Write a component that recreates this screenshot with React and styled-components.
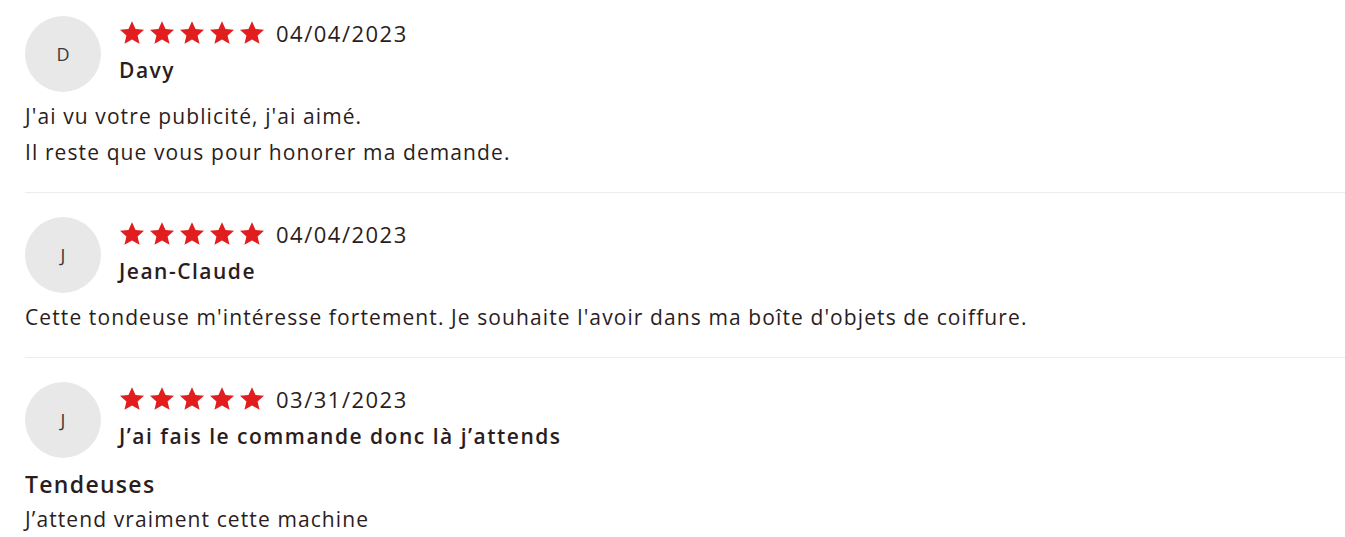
import React from "react";
import styled, { createGlobalStyle } from "styled-components";

const GlobalStyle = createGlobalStyle`
  html, body {
    margin: 0;
    padding: 0;
    background: #ffffff;
  }
  body {
    font-family: "Open Sans", "Liberation Sans", sans-serif;
    color: #2b1d1d;
  }
`;

const reviews = [
  {
    initial: "D",
    date: "04/04/2023",
    name: "Davy",
    lines: ["J'ai vu votre publicité, j'ai aimé.", "Il reste que vous pour honorer ma demande."],
  },
  {
    initial: "J",
    date: "04/04/2023",
    name: "Jean-Claude",
    lines: ["Cette tondeuse m'intéresse fortement. Je souhaite l'avoir dans ma boîte d'objets de coiffure."],
  },
  {
    initial: "J",
    date: "03/31/2023",
    name: "J’ai fais le commande donc là j’attends",
    title: "Tendeuses",
    lines: ["J’attend vraiment cette machine"],
  },
];

function Star() {
  return (
    <StarSvg viewBox="0 0 24 24">
      <path d="M12 1.2l3.25 7.15 7.85.7-5.95 5.15 1.8 7.75L12 17.9l-6.95 4.05 1.8-7.75-5.95-5.15 7.85-.7z" />
    </StarSvg>
  );
}

export default function App() {
  return (
    <>
      <GlobalStyle />
      <List>
        {reviews.map((r, i) => (
          <Review key={i} $last={i === reviews.length - 1}>
            <Header>
              <Avatar>{r.initial}</Avatar>
              <Meta>
                <RatingRow>
                  <Stars>
                    {[0, 1, 2, 3, 4].map((s) => (
                      <Star key={s} />
                    ))}
                  </Stars>
                  <DateText>{r.date}</DateText>
                </RatingRow>
                <Name>{r.name}</Name>
              </Meta>
            </Header>
            {r.title && <Title>{r.title}</Title>}
            <Body $afterTitle={!!r.title}>
              {r.lines.map((l, j) => (
                <Line key={j}>{l}</Line>
              ))}
            </Body>
          </Review>
        ))}
      </List>
    </>
  );
}

const List = styled.div`
  padding: 16px 0 0 25px;
`;

const Review = styled.div`
  padding-bottom: ${(p) => (p.$last ? "0" : "22px")};
  margin-bottom: 24px;
  border-bottom: ${(p) => (p.$last ? "none" : "1px solid #ececec")};
`;

const Header = styled.div`
  display: flex;
  align-items: flex-start;
  gap: 18px;
`;

const Avatar = styled.div`
  width: 76px;
  height: 76px;
  border-radius: 50%;
  background: #e8e8e8;
  display: flex;
  align-items: center;
  justify-content: center;
  font-size: 18px;
  color: #3a3a3a;
  flex-shrink: 0;
`;

const Meta = styled.div`
  display: flex;
  flex-direction: column;
  gap: 8px;
  padding-top: 2px;
`;

const RatingRow = styled.div`
  display: flex;
  align-items: center;
  gap: 11px;
  height: 30px;
`;

const Stars = styled.div`
  display: flex;
  gap: 4px;
`;

const StarSvg = styled.svg`
  width: 26px;
  height: 26px;
  fill: #e21d1d;
  display: block;
`;

const DateText = styled.span`
  font-size: 22px;
  letter-spacing: 1.5px;
  line-height: 30px;
`;

const Name = styled.div`
  font-size: 21px;
  font-weight: 600;
  letter-spacing: 1.5px;
  line-height: 28px;
`;

const Title = styled.div`
  margin-top: 11px;
  font-size: 23px;
  font-weight: 600;
  letter-spacing: 1.3px;
  line-height: 30px;
`;

const Body = styled.div`
  margin-top: ${(p) => (p.$afterTitle ? "2px" : "6px")};
`;

const Line = styled.p`
  margin: 0;
  font-size: 21px;
  letter-spacing: 1.1px;
  line-height: 36px;
`;
